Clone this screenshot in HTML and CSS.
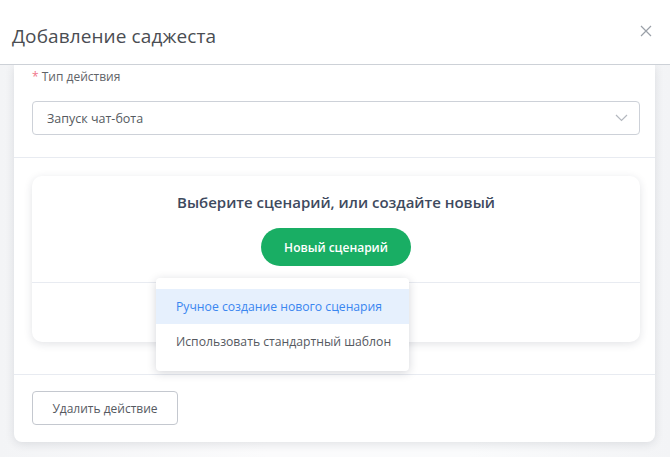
FILE: index.html
```html
<!DOCTYPE html>
<html lang="ru">
<head>
    <meta charset="UTF-8">
    <meta name="viewport" content="width=device-width, initial-scale=1.0">
    <title>Добавление саджеста</title>
    <link rel="stylesheet" href="styles.css">
</head>
<body>
    <div class="dialog">
        <div class="dialog-header">
            <span class="dialog-title">Добавление саджеста</span>
            <button class="close-btn" aria-label="Закрыть">
                <svg width="12" height="12" viewBox="0 0 12 12"><path d="M1 1L11 11M11 1L1 11" stroke="#9aa0a8" stroke-width="1.2" fill="none"/></svg>
            </button>
        </div>

        <div class="dialog-body">
            <div class="action-card">
                <div class="section">
                    <div class="field-label"><span class="required">*</span> Тип действия</div>
                    <div class="select">
                        <span>Запуск чат-бота</span>
                        <svg width="13" height="8" viewBox="0 0 13 8"><path d="M1 1l5.5 5.5L12 1" stroke="#b4b8bf" stroke-width="1.2" fill="none"/></svg>
                    </div>
                </div>

                <div class="section section-scenario">
                    <div class="scenario-card">
                        <div class="scenario-top">
                            <div class="scenario-title">Выберите сценарий, или создайте новый</div>
                            <button class="btn-green">Новый сценарий</button>
                        </div>
                        <div class="scenario-bottom"></div>
                    </div>

                    <div class="dropdown">
                        <div class="dropdown-item active">Ручное создание нового сценария</div>
                        <div class="dropdown-item">Использовать стандартный шаблон</div>
                    </div>
                </div>

                <div class="section section-footer">
                    <button class="btn-outline">Удалить действие</button>
                </div>
            </div>
        </div>
    </div>
</body>
</html>
```

FILE: styles.css
```css
body {
    margin: 0;
    font-family: "Open Sans", "Noto Sans", Arial, sans-serif;
    background: #f6f7f9;
    color: #555;
    overflow: hidden;
}

.dialog {
    width: 670px;
    height: 457px;
    display: flex;
    flex-direction: column;
}

.dialog-header {
    height: 65px;
    box-sizing: border-box;
    background: #fff;
    border-bottom: 1px solid #cdd1d7;
    display: flex;
    align-items: center;
    justify-content: space-between;
    padding: 0 18px 0 12px;
    position: relative;
    z-index: 2;
}

.dialog-title {
    margin-top: 7px;
    font-size: 19px;
    color: #4a4d52;
    letter-spacing: 0.1px;
}

.close-btn {
    border: none;
    background: none;
    padding: 0;
    margin-top: -3px;
    cursor: pointer;
    display: flex;
}

.dialog-body {
    flex: 1;
    padding: 0 15px 0 14px;
    background: linear-gradient(90deg, #f3f4f6 0%, #fbfbfc 40%, #fafbfc 70%, #f3f4f6 100%);
}

.action-card {
    background: #fff;
    border-radius: 0 0 8px 8px;
    box-shadow: 0 2px 10px rgba(30, 40, 60, 0.12);
}

.section {
    border-bottom: 1px solid #e8ebf1;
    padding: 0 15px 0 18px;
}

.section:first-child {
    padding-top: 2px;
    padding-bottom: 22px;
}

.field-label {
    font-size: 12px;
    line-height: 20px;
    color: #5f6368;
}

.required {
    color: #f0768a;
}

.select {
    margin-top: 14px;
    height: 34px;
    box-sizing: border-box;
    border: 1px solid #cdd1d8;
    border-radius: 4px;
    display: flex;
    align-items: center;
    justify-content: space-between;
    padding: 0 11px 0 14px;
    font-size: 12.5px;
    color: #555a60;
}

.section-scenario {
    position: relative;
    padding-top: 18px;
    padding-bottom: 32px;
}

.scenario-card {
    border-radius: 10px;
    background: #fff;
    box-shadow: 0 2px 8px rgba(30, 40, 60, 0.13);
}

.scenario-top {
    display: flex;
    flex-direction: column;
    align-items: center;
    padding-top: 15px;
    padding-bottom: 16px;
    border-bottom: 1px solid #e8ebf1;
}

.scenario-title {
    font-size: 15px;
    font-weight: 600;
    line-height: 22px;
    color: #3e4a5e;
}

.btn-green {
    margin-top: 15px;
    height: 38px;
    width: 150px;
    border: none;
    border-radius: 19px;
    background: #19ae64;
    color: #fff;
    font-family: inherit;
    font-size: 12px;
    font-weight: 600;
    cursor: pointer;
}

.scenario-bottom {
    height: 59px;
}

.dropdown {
    position: absolute;
    left: 142px;
    top: 120px;
    width: 253px;
    padding: 11px 0 12px;
    background: #fff;
    border-radius: 4px;
    box-shadow: 0 2px 10px rgba(20, 30, 50, 0.18);
    z-index: 3;
}

.dropdown-item {
    height: 35px;
    line-height: 35px;
    padding-left: 20px;
    font-size: 12.2px;
    white-space: nowrap;
    color: #55595f;
}

.dropdown-item.active {
    background: #e6f0fd;
    color: #3a86f0;
}

.section-footer {
    border-bottom: none;
    padding-top: 16px;
    padding-bottom: 17px;
}

.btn-outline {
    width: 146px;
    height: 34px;
    border: 1px solid #c4c8cf;
    border-radius: 4px;
    background: #fff;
    font-family: inherit;
    font-size: 12px;
    color: #55595f;
    cursor: pointer;
}
```
